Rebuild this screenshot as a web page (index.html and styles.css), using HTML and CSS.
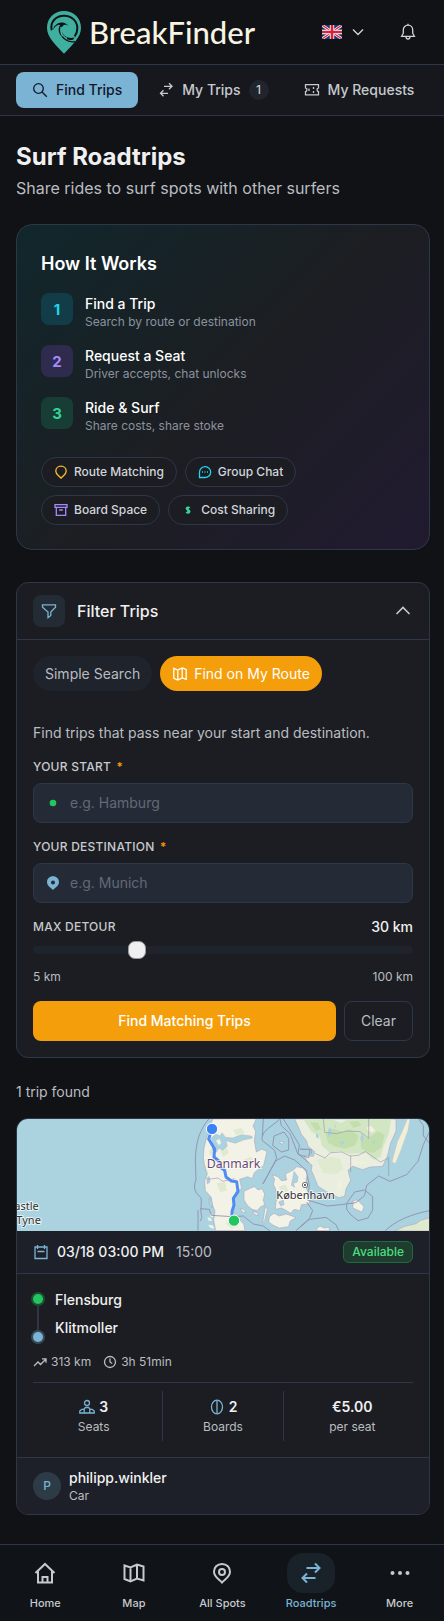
FILE: index.html
```html
<!DOCTYPE html>
<html lang="en">
<head>
  <meta charset="UTF-8">
  <meta name="viewport" content="width=device-width, initial-scale=1.0">
  <title>Surf Roadtrips - BreakFinder</title>
  <link rel="stylesheet" href="styles.css">
</head>
<body>
  <header class="topbar">
    <a href="#" class="logo">
      <svg width="35" height="43" viewBox="0 0 105 129">
        <path fill="#3fb09f" d="M51 0C22 0 0 22 0 50c0 28 24 49 51 78 27-29 51-50 51-78C102 22 80 0 51 0z"/>
        <path fill="none" stroke="#111216" stroke-width="6" d="M14 58C8 32 28 14 51 14c24 0 40 17 40 38 0 10-3 18-8 24"/>
        <path fill="#111216" d="M18 57c4-20 22-31 38-24 7 3 10 8 11 13-8-6-16-6-20-1-6 8-3 24 8 31 8 5 19 6 28 3l-5 7c-17 3-33-4-40-17-5-10-4-21 2-28-10 0-17 5-22 16z"/>
        <path fill="none" stroke="#3fb09f" stroke-width="6" d="M22 42c12-14 34-16 47 4M43 48c-4 18 4 31 17 36"/>
        <path fill="none" stroke="#111216" stroke-width="4" d="M46 77c10 13 24 17 38 15"/>
      </svg>
      <span>BreakFinder</span>
    </a>
    <div class="topbar-actions">
      <button class="lang" aria-label="Language">
        <svg width="20" height="14" viewBox="0 0 60 42">
          <rect width="60" height="42" rx="3" fill="#1a3a80"/>
          <path stroke="#fff" stroke-width="8" d="M0 0l60 42M60 0L0 42"/>
          <path stroke="#d8213b" stroke-width="4" d="M0 0l60 42M60 0L0 42"/>
          <path stroke="#fff" stroke-width="13" d="M30 0v42M0 21h60"/>
          <path stroke="#d8213b" stroke-width="8" d="M30 0v42M0 21h60"/>
        </svg>
        <svg class="icon" width="16" height="16" viewBox="0 0 16 16"><path d="M3 5.5l5 5 5-5"/></svg>
      </button>
      <button class="bell" aria-label="Notifications">
        <svg class="icon" width="20" height="20" viewBox="0 0 20 20"><path d="M10 3.2a4.7 4.7 0 0 0-4.7 4.7v3.3L3.6 14.3h12.800l-1.7-3.1V7.900A4.7 4.7 0 0 0 10 3.2zM8 14.5a2 2.500 0 0 0 4 0M10 1.800v1.4"/></svg>
      </button>
    </div>
  </header>

  <nav class="tabs">
    <a href="#" class="tab active">
      <svg class="icon" width="16" height="16" viewBox="0 0 16 16"><circle cx="6.5" cy="6.5" r="4.8"/><path d="M10 10l4.800 4.800"/></svg>
      Find Trips
    </a>
    <a href="#" class="tab">
      <svg class="icon" width="16" height="16" viewBox="0 0 16 16"><path d="M6 4.3h8M11 1.3l3 3-3 3M10 11.3H2.500M5.500 8.3l-3 3 3 3"/></svg>
      My Trips
      <span class="count">1</span>
    </a>
    <a href="#" class="tab">
      <svg class="icon" width="16" height="16" viewBox="0 0 16 16"><path d="M1.500 2.700h13v3.200a1.900 1.900 0 0 0 0 3.700v3.200h-13V9.600a1.900 1.900 0 0 0 0-3.700zM9.500 5v2M9.500 9v2M5 6.500v2.500"/></svg>
      My Requests
    </a>
  </nav>

  <main>
    <h1>Surf Roadtrips</h1>
    <p class="subtitle">Share rides to surf spots with other surfers</p>

    <section class="how">
      <h2>How It Works</h2>
      <ol class="steps">
        <li>
          <span class="num cyan">1</span>
          <div><strong>Find a Trip</strong><p>Search by route or destination</p></div>
        </li>
        <li>
          <span class="num violet">2</span>
          <div><strong>Request a Seat</strong><p>Driver accepts, chat unlocks</p></div>
        </li>
        <li>
          <span class="num green">3</span>
          <div><strong>Ride &amp; Surf</strong><p>Share costs, share stoke</p></div>
        </li>
      </ol>
      <div class="chips">
        <span class="chip">
          <svg class="icon amber-text" width="14" height="14" viewBox="0 0 14 14"><path d="M7 1.200c-3.200 0-5.200 2.300-5.200 5C1.800 8.500 3.500 9.900 4.800 11L7 13l2.200-2c1.300-1.100 3-2.500 3-4.800 0-2.700-2-5-5.200-5z"/></svg>
          Route Matching
        </span>
        <span class="chip">
          <svg class="icon cyan-text" width="14" height="14" viewBox="0 0 14 14"><path d="M1.500 12.500V7A5.600 5.400 0 1 1 7 12.500zM4 7h1M6.500 7h1M9 7h1"/></svg>
          Group Chat
        </span>
        <span class="chip">
          <svg class="icon violet-text" width="14" height="14" viewBox="0 0 14 14"><path d="M1 1.700h12v2.600H1zM2.300 4.300v8h9.400v-8M5.200 7h3.600"/></svg>
          Board Space
        </span>
        <span class="chip">
          <svg class="icon green-text" width="14" height="14" viewBox="0 0 14 14"><path stroke-width="1.800" d="M8.600 5C8 4 5.500 4 5.500 5.500S8.600 6.800 8.600 8.500 6 10 5.400 9M7 3.500v7"/></svg>
          Cost Sharing
        </span>
      </div>
    </section>

    <section class="card filter">
      <button class="filter-head" aria-expanded="true">
        <span class="filter-icon">
          <svg class="icon" width="16" height="16" viewBox="0 0 16 16"><path d="M1.500 1.800h13v2.400L9.800 9v3.500L7 14.700V9L1.500 4.200z"/></svg>
        </span>
        <span class="filter-title">Filter Trips</span>
        <svg class="icon chevron" width="20" height="20" viewBox="0 0 20 20"><path d="M3.500 13L10 6.500l6.500 6.500"/></svg>
      </button>

      <form class="filter-body">
        <div class="modes">
          <button type="button" class="mode">Simple Search</button>
          <button type="button" class="mode selected">
            <svg class="icon" width="16" height="16" viewBox="0 0 16 16"><path d="M1.800 2.300l4 1.700 4.400-2 4 1.500v9.800l-4-1.300-4.400 2-4-1.700zM5.800 4v10M10.200 2v10"/></svg>
            Find on My Route
          </button>
        </div>

        <p class="help">Find trips that pass near your start and destination.</p>

        <div class="field">
          <label for="start">Your start <span class="req">*</span></label>
          <div class="input-box">
            <svg width="14" height="14" viewBox="0 0 14 14"><circle cx="7" cy="7" r="3.300" fill="#22c55e"/></svg>
            <input type="text" id="start" placeholder="e.g. Hamburg">
          </div>
        </div>

        <div class="field">
          <label for="destination">Your destination <span class="req">*</span></label>
          <div class="input-box">
            <svg width="14" height="14" viewBox="0 0 14 14"><path fill="#7ab3d4" fill-rule="evenodd" d="M7 .2c-3.500 0-6 2.600-6 5.900C1 10 4.500 11.500 7 14c2.500-2.500 6-4 6-7.900C13 2.800 10.500.2 7 .2zm0 4.200a2 2 0 1 1 0 4 2 2 0 0 1 0-4z"/></svg>
            <input type="text" id="destination" placeholder="e.g. Munich">
          </div>
        </div>

        <div class="detour">
          <div class="detour-head">
            <label for="detour">Max detour</label>
            <output for="detour">30 km</output>
          </div>
          <input type="range" id="detour" min="5" max="100" value="30">
          <div class="scale"><span>5 km</span><span>100 km</span></div>
        </div>

        <div class="actions">
          <button type="submit" class="btn-primary">Find Matching Trips</button>
          <button type="reset" class="btn-clear">Clear</button>
        </div>
      </form>
    </section>

    <p class="found">1 trip found</p>

    <article class="card trip">
      <svg class="map" viewBox="0 0 1236 336" preserveAspectRatio="xMidYMid slice" role="img" aria-label="Route map">
        <rect width="1236" height="336" fill="#aad3df"/>
        <g transform="translate(549 -27)">
          <!-- land -->
          <g fill="#f3f2e6" stroke="#a99bb8" stroke-width="1.5">
            <path d="M38 27l-8 25-10 30-8 32-2 30 4 22 8 26-8 20 2 30 18 20 3 22 8 20-4 26 6 32h88l-4-20-26-26-10-18 8-12-4-20 10-22 16-8-6-28 24-8 14 6 6-18 28-22 10-42-16-6-16 8-6-34 4-28-8-16 10-22z"/>
            <path d="M132 244l20-10 12-4 10 10 12-4 8 16-4 18 4 14-14 8-8 10-16-4-14-12-10-16z"/>
            <path d="M216 194l18 6 10 12 16-2-4-18 24-12 10-10 18 4 16 16-6 18 2 30 12 26-6 18-22 2-4 18-18-4-10 12-16-10-12-6-18 4 2-24 10-14-10-20-8-18 4-14z"/>
            <path d="M208 320l14-10 16 8 20-6 30 10-18 12-4 16-28 4-18-8-14-10z"/>
            <path d="M196 288l6 10-8 34-6 6 4-24z"/>
            <path d="M460 272l12-2 20 20-6 16-28-12z"/>
            <path d="M350 356l10-8 12 6 14-2 4 10h-40z"/>
            <path d="M240 94l12 2-4 6-8-2zM120 296l10 2 8 8-8 2zM158 304l14 4 4 8-12-2z"/>
          </g>
          <path fill="#e9eedf" stroke="#a99bb8" stroke-width="1.5" d="M284 27l12 26 8 20 16 20 4 16 20 16-4 14-26-2 8 20 14 8-2 16 12 28 8 20 26 16 36 18 18-4 4-22 14-26-8-30 14-12 30 10 22-8 38-2 14-30 10-40 16-36V27z"/>
          <path fill="#d3e6c3" d="M310 27l24 38 24 12 8 30 22 20 30-4 30 8 50-2 24 20 20-8 8-30 16-40 8-44H444l-20 12-30-12z"/>
          <path fill="#c3deae" d="M376 70l24-14 30 10 20-8 26 20-10 28-30 10-30-6-22-12zM480 80l24 4 30-20 20 10-10 40-26 16-34-14zM330 36l24 2 10 20-18 4zM448 36l26-4 10 14-24 8z"/>
          <path fill="#dfead0" d="M350 150l40-10 30 6 10 30-20 16-40-4zM60 120l20-10 6 20-16 10zM50 220l26-4 4 26-20 4zM130 150l22-10 12 16-20 12zM236 230l20-6 10 18-20 8zM100 60l24-6 10 14-26 8zM26 122l14-4 4 12-14 6zM76 340l24-6 16 14-20 8z"/>
          <path fill="#f1f0e2" d="M500 52l14-4 12 14-10 6-14-8zM410 216l20-6-6 30-14 6zM444 150l40 2 20 8-40 4z"/>
          <path fill="#f1f0da" stroke="#c9c3c0" stroke-width="1.5" d="M622 27l-14 34-16 34-16 60 10 6 16-38 22-62 6-34z"/>
          <path fill="#dfe9cd" stroke="#a99bb8" stroke-width="1.5" d="M584 363l30-14 34-8 14-10 28-8v40z"/>
          <path fill="#f3f2e6" d="M22 322l10 2 4 10-10-2zM24 344l14 2 6 10-12-2zM30 312l8 2 2 8-8-2z"/>
          <!-- lakes and fjords -->
          <g fill="#aad3df" stroke="#a99bb8" stroke-width="1">
            <path d="M34 84l14-12 12 6 6-10 10 14 22 2 26-10 30 4 4 6-28 6-24 10-28-8 4 16-14 12-12-6-6 12-14-6 4-18z"/>
            <path d="M20 204l8-4 2 16-8 6zM28 262l10 20-2 12-10-14zM282 184l12 16-2 16-12 4 4 12-10-6 4-20zM236 276l14-6 2 14-10 4z"/>
          </g>
          <path fill="#f3f2e6" d="M48 92l10-6 6 14-8 6z"/>
          <path fill="#aad3df" d="M384 60l6-8 6 10-8 20-4-6zM484 70l8 8-4 20-6-10zM420 96l10-4 4 6-10 6zM348 70l8 4v12l-8-4zM404 40l4 10-4 4zM520 90l6 6-6 8z"/>
          <!-- borders -->
          <g fill="none" stroke="#9187a8" stroke-width="3" opacity=".8">
            <path d="M26 27C0 60-12 90-14 150l2 60c-8 20-6 36 14 52 6 10-4 40 4 60l-6 12M0 296l28 2 6 18 62 4 34-2 30 24 30 6 20 15M-6 300v62"/>
            <path d="M190 27l-4 64 38 30 6 24-40 76M238 28c-20 20-50 34-50 50M240 27l4 20 26 24 24 62 32 10 4-24-30-2"/>
            <path d="M222 78l30-12 14 20v34l-22 6-26-20zM250 27l20 32 28 46-4 26 34 28M188 222l40-70 26-14 30 12 34 30 10 46-6 44 60 18 40-4 46-6 26-22 6-30 36-28 34 16 50-20 34-40 16-50 34-72"/>
            <path d="M440 280l24-34 30-6 24 20v40l-14 24-30 8-24-20-10-14zM656 27l14 20v30l18 22M288 362l40-34 50-6 30 22 8 18M320 276l18 26-10 24-36 32M556 362c30-30 80-50 132-60"/>
            <path stroke-width="2" d="M345 130l30 14 16-16 34-2 26 12 24-2 22-12 44 32 22-10M300 118h34v14M566 140v58M370 27l4 40 36 4 30-8 40 2 26 20V27M452 136v50M24 208l30-4 14 10 36-8"/>
          </g>
          <path fill="none" stroke="#4f8df5" stroke-width="9" stroke-linejoin="round" d="M36 57l-10 30 18 30-2 24 14 12 4 18 14 10 4 20 16 12 16 2 4 30-14 20 2 20-6 20v26"/>
          <circle cx="36" cy="57" r="17" fill="#3b82f6" stroke="#fff" stroke-width="3"/>
          <circle cx="102" cy="332" r="17" fill="#22c55e" stroke="#fff" stroke-width="3"/>
          <circle cx="315" cy="225" r="8" fill="#fff" stroke="#333" stroke-width="2"/>
          <circle cx="315" cy="225" r="3" fill="#333"/>
          <text class="map-country" x="20" y="173">Danmark</text>
          <text class="map-city" x="229" y="266">København</text>
        </g>
        <text class="map-city" x="-8" y="273">astle</text>
        <text class="map-city" x="-2" y="315">Tyne</text>
      </svg>

      <div class="trip-head">
        <svg class="icon blue" width="16" height="16" viewBox="0 0 16 16"><path d="M2 3h12v11.500H2zM4.500 1v4M11.500 1v4M4.500 7.500h7"/></svg>
        <strong>03/18 03:00 PM</strong>
        <time>15:00</time>
        <span class="badge">Available</span>
      </div>

      <div class="trip-body">
        <div class="route">
          <div class="route-line"><i class="dot from"></i><i class="line"></i><i class="dot to"></i></div>
          <div class="route-names"><span>Flensburg</span><span>Klitmoller</span></div>
        </div>
        <div class="meta">
          <span><svg class="icon" width="14" height="14" viewBox="0 0 14 14"><path d="M1 11l4-4 2.500 2.500L13 4M9 3.800h4v4"/></svg>313 km</span>
          <span><svg class="icon" width="14" height="14" viewBox="0 0 14 14"><circle cx="7" cy="7" r="5.500"/><path d="M7 3.500V7l2.200 1.500"/></svg>3h 51min</span>
        </div>
        <div class="stats">
          <div>
            <strong><svg class="icon blue" width="16" height="16" viewBox="0 0 16 16"><circle cx="8" cy="4" r="2.500"/><path d="M.8 14v-2l2-1.700h2.400V14zM5.200 14V9.800L6.500 8.500h3l1.300 1.300V14zM10.800 14v-3.700h2.400l2 1.700v2z"/></svg>3</strong>
            <span>Seats</span>
          </div>
          <div>
            <strong><svg class="icon blue" width="16" height="16" viewBox="0 0 16 16"><ellipse cx="8" cy="8" rx="5.500" ry="6.800"/><path d="M8 1.200v13.600"/></svg>2</strong>
            <span>Boards</span>
          </div>
          <div>
            <strong>€5.00</strong>
            <span>per seat</span>
          </div>
        </div>
      </div>

      <div class="driver">
        <span class="avatar">P</span>
        <div><strong>philipp.winkler</strong><span>Car</span></div>
      </div>
    </article>
  </main>

  <nav class="bottom-nav">
    <a href="#">
      <span class="pill"><svg class="icon" width="24" height="24" viewBox="0 0 24 24"><path d="M2.500 12L12 3l9.500 9M5 10v11.500h14V10M9.500 21.500v-5.500h5v5.500"/></svg></span>
      Home
    </a>
    <a href="#">
      <span class="pill"><svg class="icon" width="24" height="24" viewBox="0 0 24 24"><path d="M2.500 4.500l6 2 6.500-3 6.500 2v14l-6.500-2-6.500 3-6-2.500zM8.500 6.500v14M15 3.500v14"/></svg></span>
      Map
    </a>
    <a href="#">
      <span class="pill"><svg class="icon" width="24" height="24" viewBox="0 0 24 24"><path d="M12 3c-5 0-8 3.500-8 7.800 0 5 4.500 7.200 8 10.700 3.500-3.500 8-5.700 8-10.700C20 6.500 17 3 12 3z"/><circle cx="12" cy="11" r="3"/></svg></span>
      All Spots
    </a>
    <a href="#" class="current">
      <span class="pill"><svg class="icon" width="24" height="24" viewBox="0 0 24 24"><path d="M7.500 7h13M16 2.500L20.500 7 16 11.500M16.500 17h-13M8 12.500L3.500 17 8 21.500"/></svg></span>
      Roadtrips
    </a>
    <a href="#">
      <span class="pill"><svg width="24" height="24" viewBox="0 0 24 24" fill="currentColor"><circle cx="4.500" cy="12" r="2"/><circle cx="12" cy="12" r="2"/><circle cx="19.500" cy="12" r="2"/></svg></span>
      More
    </a>
  </nav>
</body>
</html>
```
FILE: styles.css
```css
* {
  box-sizing: border-box;
  margin: 0;
  padding: 0;
}
body {
  background-color: #111216;
  color: #f0f0f0;
  font-family: Inter, "Liberation Sans", sans-serif;
  font-size: 14px;
  line-height: 20px;
}
button, input {
  font: inherit;
  color: inherit;
  background: none;
  border: none;
}
a {
  color: inherit;
  text-decoration: none;
}
svg {
  display: block;
  flex: none;
}
strong {
  font-weight: 500;
}
.icon {
  fill: none;
  stroke: currentColor;
  stroke-width: 1.3;
}
.blue {
  color: #7ab3d4;
}

/* top bar */
.topbar {
  display: flex;
  align-items: center;
  justify-content: space-between;
  height: 65px;
  padding: 0 26px 0 47px;
  border-bottom: 1px solid #2d3748;
}
.logo {
  display: flex;
  align-items: center;
  gap: 7px;
  color: #f7f4e3;
  font-family: Lato, sans-serif;
  font-size: 31px;
  font-weight: 500;
  line-height: 40px;
}
.topbar-actions {
  display: flex;
  align-items: center;
  gap: 32px;
  color: #d1d5db;
}
.lang {
  display: flex;
  align-items: center;
  gap: 8px;
}

/* tabs */
.tabs {
  display: flex;
  gap: 4px;
  padding: 7px 14px 7px 16px;
  background: #17181d;
  border-bottom: 1px solid #2d3748;
}
.tab {
  display: flex;
  align-items: center;
  gap: 8px;
  height: 36px;
  padding: 0 15px 0 16px;
  border-radius: 8px;
  color: #c6cacd;
  font-weight: 500;
  white-space: nowrap;
}
.tab.active {
  padding-right: 16px;
  background: #7ab3d4;
  color: #111827;
}
.count {
  width: 20px;
  border-radius: 10px;
  background: #20242d;
  font-size: 12px;
  text-align: center;
}

main {
  padding: 24px 14px 29px 16px;
}
h1 {
  font-size: 24px;
  line-height: 34px;
}
.subtitle {
  margin: 2px 0 24px;
  color: #b9bdc0;
  font-size: 16px;
  line-height: 24px;
}

/* how it works */
.how {
  margin-bottom: 32px;
  padding: 24px;
  border: 1px solid #2d3748;
  border-radius: 16px;
  background: linear-gradient(135deg, #11272c 0%, #1c1e22 50%, #211a30 100%);
}
h2 {
  margin-bottom: 14px;
  color: #fff;
  font-size: 18px;
  font-weight: 600;
  line-height: 30px;
}
.steps {
  display: flex;
  flex-direction: column;
  gap: 14px;
  list-style: none;
}
.steps li {
  display: flex;
  gap: 12px;
}
.steps li div {
  padding-top: 2px;
}
.steps strong {
  display: block;
  color: #fff;
  line-height: 18px;
}
.steps p {
  color: #8b929e;
  font-size: 12px;
  line-height: 18px;
}
.num {
  width: 32px;
  height: 32px;
  border-radius: 8px;
  font-size: 15px;
  font-weight: 700;
  line-height: 34px;
  text-align: center;
}
.cyan {
  background: #123d48;
}
.violet {
  background: #2e2b4e;
}
.green {
  background: #183d35;
}
.cyan, .cyan-text {
  color: #22d3ee;
}
.violet, .violet-text {
  color: #a78bfa;
}
.green, .green-text {
  color: #34d399;
}
.amber-text {
  color: #fbbf24;
}
.chips {
  display: flex;
  flex-wrap: wrap;
  gap: 8px;
  margin-top: 22px;
}
.chip {
  display: flex;
  align-items: center;
  gap: 6px;
  height: 30px;
  padding: 0 12px;
  border: 1px solid #2d3748;
  border-radius: 15px;
  background: #1c1d22;
  color: #d1d5db;
  font-size: 12px;
  font-weight: 500;
  line-height: 22px;
}

/* filter */
.card {
  border: 1px solid #2d3748;
  border-radius: 12px;
  background: #1c1d22;
  overflow: hidden;
}
.filter-head {
  display: flex;
  align-items: center;
  gap: 12px;
  width: 100%;
  padding: 12px 16px;
  border-bottom: 1px solid #2d3748;
}
.chevron {
  color: #c6cacd;
  stroke-width: 1.6;
}
.filter-icon {
  padding: 8px;
  border-radius: 8px;
  background: #232c34;
  color: #7ab3d4;
}
.filter-title {
  flex: 1;
  font-size: 16px;
  font-weight: 500;
  text-align: left;
}
.filter-body {
  padding: 16px;
}
.modes {
  display: flex;
  gap: 8px;
}
.mode {
  display: flex;
  align-items: center;
  gap: 6px;
  height: 35px;
  padding: 0 12px;
  border-radius: 18px;
  background: #1f232c;
  color: #b9bdc0;
}
.mode.selected {
  background: #f59e0b;
  color: #fff;
}
.help {
  margin: 32px 0 16px;
  color: #b9bdc0;
}
.field {
  margin-bottom: 16px;
}
label {
  display: block;
  color: #c6cacd;
  font-size: 12px;
  font-weight: 500;
  letter-spacing: 0.02em;
  line-height: 16px;
  text-transform: uppercase;
}
.req {
  margin-left: 2px;
  color: #f59e0b;
}
.input-box {
  display: flex;
  align-items: center;
  gap: 10px;
  height: 40px;
  margin-top: 8px;
  padding: 0 12px;
  border: 1px solid #2d3748;
  border-radius: 8px;
  background: #252b36;
}
.input-box input {
  flex: 1;
  min-width: 0;
  outline: none;
}
.input-box input::placeholder {
  color: #626978;
}
.detour-head, .scale {
  display: flex;
  justify-content: space-between;
  line-height: 16px;
}
.detour-head output {
  font-weight: 500;
}
input[type=range] {
  display: block;
  -webkit-appearance: none;
  appearance: none;
  width: 100%;
  height: 18px;
  margin: 6px 0 10px;
}
input[type=range]::-webkit-slider-runnable-track {
  height: 8px;
  border-radius: 4px;
  background: #1f232c;
}
input[type=range]::-webkit-slider-thumb {
  -webkit-appearance: none;
  width: 18px;
  height: 18px;
  margin-top: -5px;
  border: 1px solid #9a9a9a;
  border-radius: 7px;
  background: #efefef;
}
.scale {
  color: #b9bdc0;
  font-size: 12px;
}
.actions {
  display: flex;
  gap: 8px;
  margin-top: 16px;
}
.actions button {
  height: 40px;
  border-radius: 8px;
}
.btn-primary {
  flex: 1;
  background: #f59e0b;
  color: #fff;
  font-weight: 500;
}
.actions .btn-clear {
  padding: 0 16px;
  border: 1px solid #2d3748;
  color: #b9bdc0;
}

/* trips */
.found {
  margin: 24px 0 16px;
  color: #b9bdc0;
}
.map {
  width: 100%;
  height: 112px;
}
.map text {
  font-family: "Noto Sans", sans-serif;
  paint-order: stroke;
  stroke: #fff;
  stroke-opacity: 0.7;
  stroke-width: 6px;
}
.map-country {
  fill: #6b4a72;
  font-size: 37px;
}
.map-city {
  fill: #333;
  font-size: 33px;
}
.trip-head {
  display: flex;
  align-items: center;
  gap: 8px;
  padding: 10px 16px;
  border-bottom: 1px solid #2d3748;
  background: #1d2028;
}
.trip-head time {
  margin-left: 4px;
  color: #b9bdc0;
}
.badge {
  margin-left: auto;
  padding: 0 8px;
  border: 1px solid #1d6b3c;
  border-radius: 6px;
  background: #1e3d2e;
  color: #4ade80;
  font-size: 12px;
  font-weight: 500;
}
.trip-body {
  padding: 16px;
}
.route {
  display: flex;
  gap: 12px;
}
.route-line {
  display: flex;
  flex-direction: column;
  align-items: center;
  gap: 2px;
  padding-top: 4px;
}
.dot {
  width: 10px;
  height: 10px;
  border-radius: 50%;
}
.from {
  background: #22c55e;
  box-shadow: 0 0 0 2px rgba(34, 197, 94, 0.3);
}
.to {
  background: #7ab3d4;
  box-shadow: 0 0 0 2px rgba(122, 179, 212, 0.3);
}
.line {
  width: 2px;
  height: 24px;
  background: #2d3748;
}
.route-names {
  display: flex;
  flex-direction: column;
  gap: 8px;
  font-weight: 500;
}
.meta {
  display: flex;
  gap: 12px;
  padding: 12px 0;
  border-bottom: 1px solid #2d3748;
  color: #b9bdc0;
  font-size: 12px;
  line-height: 16px;
}
.meta span {
  display: flex;
  align-items: center;
  gap: 4px;
}
.stats {
  display: grid;
  grid-template-columns: repeat(3, 1fr);
  gap: 8px;
  margin-top: 8px;
}
.stats div {
  display: flex;
  flex-direction: column;
  align-items: center;
  gap: 2px;
  padding: 6px 0;
}
.stats div:nth-child(2) {
  border-left: 1px solid #2d3748;
  border-right: 1px solid #2d3748;
}
.stats strong {
  display: flex;
  align-items: center;
  gap: 4px;
  font-weight: 600;
}
.stats span, .driver div span {
  color: #b9bdc0;
  font-size: 12px;
  line-height: 16px;
}
.driver {
  display: flex;
  align-items: center;
  gap: 8px;
  padding: 10px 16px;
  border-top: 1px solid #2d3748;
  background: #1d2028;
}
.driver div {
  display: flex;
  flex-direction: column;
}
.avatar {
  width: 28px;
  height: 28px;
  border-radius: 50%;
  background: #2d3b46;
  color: #7ab3d4;
  font-size: 12px;
  font-weight: 500;
  line-height: 28px;
  text-align: center;
}

/* bottom navigation */
.bottom-nav {
  display: grid;
  grid-template-columns: repeat(5, 1fr);
  padding: 8px 0 10px 1px;
  border-top: 1px solid #2d3748;
  background: #101317;
}
.bottom-nav a {
  display: flex;
  flex-direction: column;
  align-items: center;
  gap: 2px;
  color: #c6cacd;
  font-size: 11px;
  font-weight: 500;
  line-height: 16px;
}
.bottom-nav .icon {
  stroke-width: 2;
}
.bottom-nav .current {
  color: #7ab3d4;
}
.pill {
  padding: 8px 12px;
  border-radius: 16px;
}
.current .pill {
  background: #1a2229;
}
```
